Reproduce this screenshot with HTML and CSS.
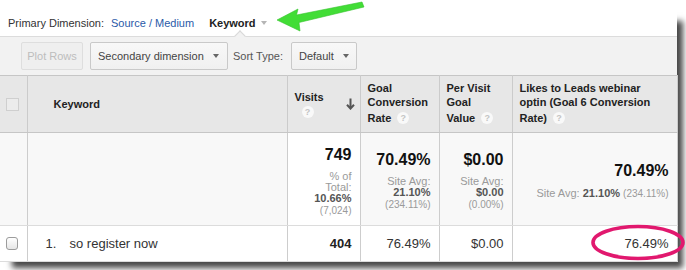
FILE: index.html
```html
<!DOCTYPE html>
<html>
<head>
<meta charset="utf-8">
<link rel="stylesheet" href="styles.css">
</head>
<body>
<div class="stage">
  <div class="panel">
    <div class="dimbar">
      <span class="dim-label">Primary Dimension:</span>
      <a class="dim-link">Source / Medium</a>
      <span class="dim-current">Keyword<span class="caret-sm"></span></span>
    </div>
    <div class="toolbar">
      <button class="btn btn-disabled">Plot Rows</button>
      <button class="btn btn-secondary">Secondary dimension<span class="tri"></span></button>
      <span class="sort-label">Sort Type:</span>
      <button class="btn btn-default">Default<span class="tri"></span></button>
    </div>
    <table class="grid">
      <colgroup>
        <col class="c-cb">
        <col class="c-kw">
        <col class="c-visits">
        <col class="c-goal">
        <col class="c-pv">
        <col class="c-likes">
      </colgroup>
      <thead>
        <tr>
          <th class="cb-cell"><span class="cb-head"></span></th>
          <th class="kw-head">Keyword</th>
          <th class="sorted">
            <div class="th-flex">
              <div>Visits<br><span class="help help-solo">?</span></div>
              <svg class="sort-arrow" width="9" height="12" viewBox="0 0 9 12"><path d="M4.5 0.5 V10.5 M1 6.8 L4.5 10.6 L8 6.8" fill="none" stroke="#555" stroke-width="2"/></svg>
            </div>
          </th>
          <th>Goal<br>Conversion<br><span class="last-line">Rate<span class="help">?</span></span></th>
          <th>Per Visit<br>Goal<br><span class="last-line">Value<span class="help">?</span></span></th>
          <th class="last-col">Likes to Leads webinar<br>optin (Goal 6 Conversion<br><span class="last-line">Rate)<span class="help">?</span></span></th>
        </tr>
      </thead>
      <tbody>
        <tr class="totals">
          <td class="cb-cell"></td>
          <td></td>
          <td class="num sorted-cell">
            <div class="big">749</div>
            <div class="sub">% of<br>Total:<br><b>10.66%</b><br><small>(7,024)</small></div>
          </td>
          <td class="num">
            <div class="big">70.49%</div>
            <div class="sub">Site Avg:<br><b>21.10%</b><br><small>(234.11%)</small></div>
          </td>
          <td class="num">
            <div class="big">$0.00</div>
            <div class="sub">Site Avg:<br><b>$0.00</b><br><small>(0.00%)</small></div>
          </td>
          <td class="num last-col">
            <div class="big">70.49%</div>
            <div class="sub sub-line">Site Avg: <b>21.10%</b> <small>(234.11%)</small></div>
          </td>
        </tr>
        <tr class="row">
          <td class="cb-cell"><span class="cb-row"></span></td>
          <td class="kw-cell"><span class="idx">1.</span>so register now</td>
          <td class="num"><b>404</b></td>
          <td class="num">76.49%</td>
          <td class="num">$0.00</td>
          <td class="num last-col">76.49%</td>
        </tr>
      </tbody>
    </table>
  </div>
  <svg class="green-arrow" width="100" height="34" viewBox="270 0 100 34">
    <polygon points="277,20 298,9 296.5,15 362,2 364,7 299,22.5 300,31" fill="#42dd36" stroke="#34c22c" stroke-width="0.6" stroke-linejoin="round"/>
  </svg>
  <svg class="circle-mark" width="98" height="42" viewBox="588 222 98 42">
    <ellipse cx="638" cy="242.5" rx="45" ry="16" fill="none" stroke="#e1186e" stroke-width="3.6"/>
  </svg>
</div>
</body>
</html>
```

FILE: styles.css
```css
body {
  margin: 0;
  background: #fff;
  font-family: "Liberation Sans", Arial, sans-serif;
}

.stage {
  position: relative;
  width: 686px;
  height: 270px;
  overflow: hidden;
}

.panel {
  margin-top: 9px;
  width: 677px;
  background: #fff;
  box-shadow: 9px 9px 6px -3px rgba(0, 0, 0, 0.72);
}

/* primary dimension bar */
.dimbar {
  height: 27px;
  display: flex;
  align-items: center;
  padding-left: 8px;
  font-size: 11px;
  color: #333;
}

.dim-link {
  margin-left: 7px;
  color: #2a5aa8;
}

.dim-current {
  position: relative;
  margin-left: 15px;
  font-weight: bold;
  color: #222;
  display: flex;
  align-items: center;
  height: 27px;
}

.caret-sm {
  width: 0;
  height: 0;
  margin-left: 5px;
  border-left: 3.5px solid transparent;
  border-right: 3.5px solid transparent;
  border-top: 4px solid #b5b5b5;
}

.dim-current::after {
  content: "";
  position: absolute;
  left: 27px;
  bottom: -4px;
  width: 7px;
  height: 7px;
  background: #f2f2f2;
  border-left: 1px solid #d8d8d8;
  border-top: 1px solid #d8d8d8;
  transform: rotate(45deg);
}

/* toolbar */
.toolbar {
  display: flex;
  align-items: center;
  border-top: 1px solid #dcdcdc;
  background: #f2f2f2;
  padding: 5px 0 5px 21px;
}

.btn {
  height: 28px;
  box-sizing: border-box;
  font-family: "Liberation Sans", Arial, sans-serif;
  font-size: 11px;
  color: #444;
  white-space: nowrap;
  border: 1px solid #c9c9c9;
  border-radius: 2px;
  background: linear-gradient(#f8f8f8, #f0f0f0);
  display: flex;
  align-items: center;
  padding: 0 7px;
  margin: 0;
}

.btn-disabled {
  width: 62px;
  padding: 0;
  justify-content: center;
  color: #bdbdbd;
  border-color: #dedede;
  background: #efefef;
}

.btn-secondary {
  margin-left: 7px;
  width: 138px;
  padding-right: 8px;
  justify-content: space-between;
}

.btn-default {
  margin-left: 8px;
  width: 66px;
  padding-right: 7px;
  justify-content: space-between;
}

.tri {
  width: 0;
  height: 0;
  border-left: 3.5px solid transparent;
  border-right: 3.5px solid transparent;
  border-top: 4px solid #666;
}

.sort-label {
  margin-left: 5px;
  font-size: 11px;
  color: #555;
}

/* grid */
.grid {
  width: 677px;
  table-layout: fixed;
  border-collapse: collapse;
  border-top: 1px solid #c6c6c6;
}

.c-cb { width: 27px; }
.c-kw { width: 260px; }
.c-visits { width: 73px; }
.c-goal { width: 79px; }
.c-pv { width: 73px; }
.c-likes { width: 165px; }

.grid th {
  height: 56px;
  padding: 0 7px;
  background: #e7e7e7;
  border-right: 1px solid #cbcbcb;
  border-bottom: 1px solid #c6c6c6;
  text-align: left;
  vertical-align: middle;
  font-size: 11px;
  line-height: 14px;
  font-weight: bold;
  color: #222;
}

.grid th.kw-head {
  padding-left: 26px;
}

.grid th.cb-cell,
.grid td.cb-cell {
  padding: 0 0 0 6px;
}

.last-col {
  border-right: 1px solid #c6c6c6;
}

.last-line {
  display: inline-flex;
  align-items: center;
  height: 18px;
}

.th-flex {
  display: flex;
  align-items: center;
  justify-content: space-between;
  margin-right: -2px;
}

.sort-arrow {
  display: block;
}

.help {
  display: inline-flex;
  align-items: center;
  justify-content: center;
  width: 12px;
  height: 12px;
  margin-left: 6px;
  border-radius: 50%;
  background: #f9f9f9;
  color: #c4c4c4;
  font-size: 9px;
  font-weight: bold;
}

.help-solo {
  margin: 2px 0 0 7px;
}

.cb-head {
  display: block;
  width: 11px;
  height: 11px;
  border: 1px solid #cfcfcf;
  background: #ececec;
}

.cb-row {
  display: block;
  width: 10px;
  height: 11px;
  border: 1px solid #9c9c9c;
  border-radius: 3px;
  background: linear-gradient(#ffffff, #e6e6e6);
}

.grid td {
  border-right: 1px solid #cdcdcd;
  border-bottom: 1px solid #dcdcdc;
  vertical-align: middle;
}

.totals td {
  height: 87px;
  padding-top: 4px;
  background: #f8f8f8;
}

.totals td.sorted-cell {
  background: #fff;
}

.num {
  text-align: right;
  padding-right: 8px;
  padding-left: 4px;
}

.big {
  font-size: 16px;
  font-weight: bold;
  line-height: 20px;
  color: #111;
}

.sub {
  margin-top: 6px;
  font-size: 11px;
  line-height: 11px;
  color: #9a9a9a;
}

.sub b {
  color: #555;
}

.sub small {
  font-size: 10px;
  line-height: 13px;
}

.row td {
  height: 33px;
  background: #fff;
  font-size: 13px;
  color: #333;
}

.row td b {
  color: #222;
}

.kw-cell {
  padding-left: 18px;
}

.idx {
  display: inline-block;
  width: 24px;
}

/* annotations */
.green-arrow {
  position: absolute;
  left: 270px;
  top: 0;
}

.circle-mark {
  position: absolute;
  left: 588px;
  top: 222px;
}
```
